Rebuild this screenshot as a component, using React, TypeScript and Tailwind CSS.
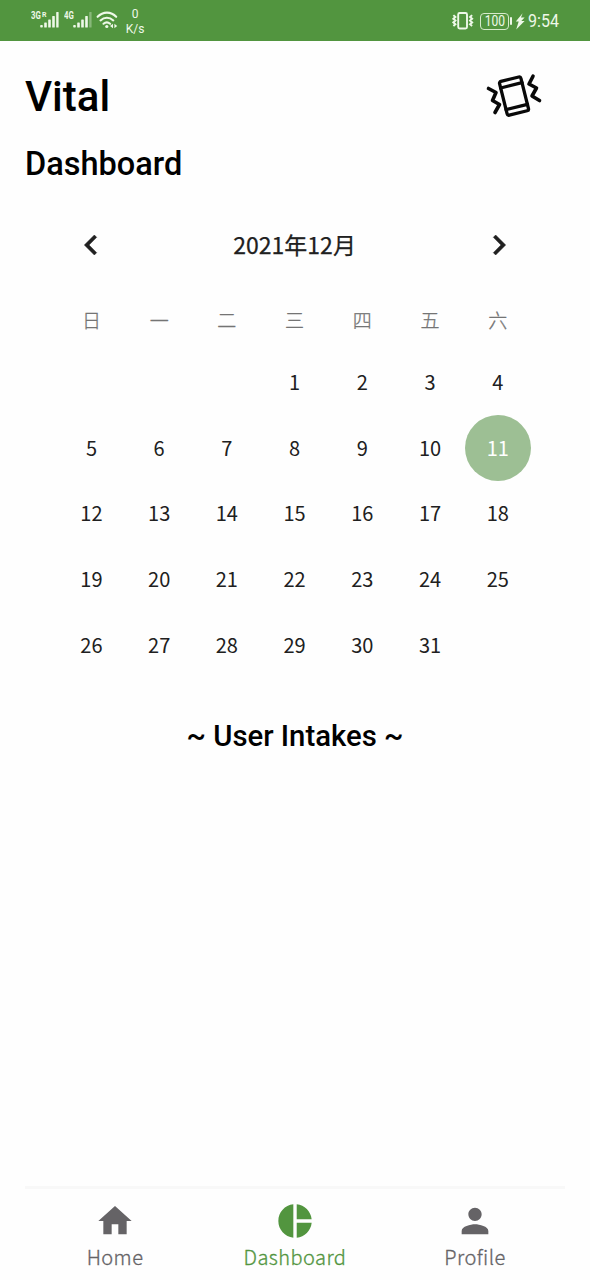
import React from "react";

const weekdays = ["日", "一", "二", "三", "四", "五", "六"];
const leadingBlanks = 3;
const cells: (number | null)[] = [
  ...Array.from({ length: leadingBlanks }, () => null),
  ...Array.from({ length: 31 }, (_, i) => i + 1),
];

function SignalBars({ weakLast = false }: { weakLast?: boolean }) {
  return (
    <svg width="19" height="18" viewBox="0 0 19 18" fill="#eef8e8">
      <rect x="0.2" y="14" width="2.6" height="2.6" rx="0.8" />
      <rect x="4.2" y="11.5" width="2.6" height="5" rx="0.6" />
      <rect x="8.2" y="8.5" width="2.6" height="8" rx="0.6" />
      <rect x="12.2" y="5" width="2.6" height="11.5" rx="0.6" />
      <rect x="16.2" y="1" width="2.4" height="15.5" rx="0.6" opacity={weakLast ? 0.35 : 1} />
    </svg>
  );
}

function StatusBar() {
  return (
    <header className="flex h-[41px] shrink-0 items-start bg-[#52953f] font-['Roboto',sans-serif] text-[#eef8e8]">
      <div className="flex pt-[11px] pl-[31px]">
        <div className="flex h-[18px] w-[33px]">
          <span className="w-[9px] text-[10px] leading-[10px] font-bold whitespace-nowrap">
            <span className="inline-block origin-left scale-x-[0.78]">3G</span>
          </span>
          <span className="-mr-[7px] w-[7px] pl-[2px] text-[7px] leading-[8px] font-bold">R</span>
          <SignalBars />
        </div>
        <div className="flex h-[18px] w-[32px]">
          <span className="w-[9px] text-[10px] leading-[10px] font-bold whitespace-nowrap">
            <span className="inline-block origin-left scale-x-[0.78]">4G</span>
          </span>
          <SignalBars weakLast />
        </div>
        <svg width="22" height="19" viewBox="0 0 22 19" fill="none" stroke="#eef8e8" strokeWidth="2.1" strokeLinecap="round">
          <path d="M1.6 5.8C7 .2 15 .2 20.2 5.8" />
          <path d="M4.5 9.4c3.8-3.6 9-3.6 12.8 0" />
          <path d="M7.5 12.7c2-1.7 4.6-1.7 6.6 0" />
          <circle cx="10.8" cy="15.5" r="1.6" fill="#eef8e8" stroke="none" />
          <path d="M17 12.7v4.6L14 15zM18.4 12.7v4.6l2.8-2.3z" fill="#eef8e8" stroke="none" />
        </svg>
      </div>
      <div className="ml-[6px] flex w-[22px] flex-col items-center pt-[7px] text-[12px] leading-[14.5px]">
        <span>0</span>
        <span className="whitespace-nowrap">K/s</span>
      </div>
      <div className="ml-auto flex items-center pt-[11px] pr-[31px]">
        <svg width="22" height="20" viewBox="0 0 22 20" fill="none" stroke="#eef8e8" strokeWidth="1.9">
          <rect x="6.2" y="2" width="8.8" height="15.5" rx="1.5" />
          <path d="M1.4 4.1l2 1.9-2 1.8 2 1.8-2 1.8 2 1.8-2 1.7M20.1 4.1l-2 1.9 2 1.8-2 1.8 2 1.8-2 1.8 2 1.7" strokeWidth="2" />
        </svg>
        <div className="ml-[6px] flex h-[17px] w-[29px] items-center justify-center rounded-[4px] border-[1.5px] border-[#d6eacb] text-[14px] leading-none">
          <span className="scale-x-[0.86]">100</span>
        </div>
        <span className="ml-[1px] h-[8px] w-[2px] rounded-sm bg-[#eef8e8]" />
        <svg width="10" height="17" viewBox="0 0 10 17" fill="#eef8e8" className="ml-[3px]">
          <path d="M7.6.3.8 8.4h2.9L1.2 16.5 9.6 8H6.3l3.3-3.6H6z" />
        </svg>
        <span className="ml-[3px] w-[31px] text-[18px] leading-[20px] whitespace-nowrap">
          <span className="inline-block origin-left scale-x-[0.89]">9:54</span>
        </span>
      </div>
    </header>
  );
}

function ShakingPhone() {
  return (
    <svg width="60" height="50" viewBox="0 0 60 50" fill="none" stroke="#090909" strokeWidth="3.3" strokeLinejoin="round" strokeLinecap="round">
      <g transform="rotate(-14 30 25)">
        <rect x="19" y="7.7" width="22" height="34.8" rx="1.8" />
        <path d="M19 14h22M19 36.3h22" />
      </g>
      <path d="M4.5 17.5 12 21.5 8.5 29.5 15.5 33.5 11 41.5" strokeWidth="3.6" />
      <path d="M49 5.2 45 13 52.5 17 48 25 55.5 29.5" strokeWidth="3.6" />
    </svg>
  );
}

function NavItem({ label, path, active = false }: { label: string; path: string; active?: boolean }) {
  return (
    <a className={active ? "flex w-[180px] flex-col items-center text-[#52953f]" : "flex w-[180px] flex-col items-center text-[#656366]"}>
      <svg width="40" height="40" viewBox="0 0 24 24" fill="currentColor">
        <path d={path} />
      </svg>
      <span className="mt-[3px] font-['Noto_Sans_CJK_SC',sans-serif] text-[20px] leading-[26px] font-light tracking-[0.45px] [-webkit-text-stroke:0.3px_currentColor]">{label}</span>
    </a>
  );
}

export default function App() {
  return (
    <div className="flex h-[1280px] w-[590px] flex-col overflow-hidden bg-[#fefefe] text-black">
      <StatusBar />
      <main className="flex grow flex-col font-['Roboto',sans-serif]">
        <div className="flex h-[104px] justify-between pl-[25px]">
          <h1 className="pt-[31px] text-[42px] leading-[50px] font-medium">Vital</h1>
          <div className="pt-[30px] pr-[46px]">
            <ShakingPhone />
          </div>
        </div>
        <h2 className="mt-px h-[35px] pl-[25px] text-[32.5px] leading-[36px] font-medium">Dashboard</h2>
        <section className="mt-[39px] ml-[57.6px] w-[474px] font-['Noto_Sans_CJK_SC',sans-serif] text-[#202020]">
          <div className="flex h-[50px] items-center justify-between px-[13px]">
            <svg width="40" height="40" viewBox="0 0 24 24" fill="#202020" stroke="#202020" strokeWidth="0.3">
              <path d="M15.41 7.41 14 6l-6 6 6 6 1.41-1.41L10.83 12z" />
            </svg>
            <span className="-mt-[2px] text-[23px] leading-[30px] font-normal [-webkit-text-stroke:0.25px_#202020]">2021年12月</span>
            <svg width="40" height="40" viewBox="0 0 24 24" fill="#202020" stroke="#202020" strokeWidth="0.3">
              <path d="M10 6 8.59 7.41 13.17 12l-4.58 4.59L10 18l6-6z" />
            </svg>
          </div>
          <div className="mt-[34px] grid grid-cols-7 text-center text-[19px] leading-[32px] font-light text-[#747474] [-webkit-text-stroke:0.3px_#747474]">
            {weekdays.map((day) => (
              <span key={day}>{day}</span>
            ))}
          </div>
          <div className="mt-[13px] grid auto-rows-[65.7px] grid-cols-7 place-items-center text-[20px]">
            {cells.map((day, i) => (
              <span
                key={i}
                className={
                  day === 11
                    ? "flex size-[66px] items-center justify-center rounded-full bg-[#9dbf94] text-white"
                    : "flex size-[66px] items-center justify-center"
                }
              >
                {day}
              </span>
            ))}
          </div>
        </section>
        <h3 className="mt-[41px] text-center text-[29.3px] leading-[36px] font-medium">~ User Intakes ~</h3>
      </main>
      <nav className="mx-[25px] flex h-[94px] shrink-0 justify-center border-t-[3px] border-[#f8f8f8] pt-[12px]">
        <NavItem label="Home" path="M10 20v-6h4v6h5v-8h3L12 3 2 12h3v8z" />
        <NavItem
          label="Dashboard"
          active
          path="M11 2v20c-5.07-.5-9-4.79-9-10s3.93-9.5 9-10zm2.03 0v8.99H22c-.47-4.74-4.24-8.52-8.97-8.99zm0 11.01V22c4.74-.47 8.5-4.25 8.97-8.99h-8.97z"
        />
        <NavItem label="Profile" path="M12 12c2.21 0 4-1.79 4-4s-1.79-4-4-4-4 1.79-4 4 1.79 4 4 4zm0 2c-2.67 0-8 1.34-8 4v2h16v-2c0-2.66-5.33-4-8-4z" />
      </nav>
    </div>
  );
}
